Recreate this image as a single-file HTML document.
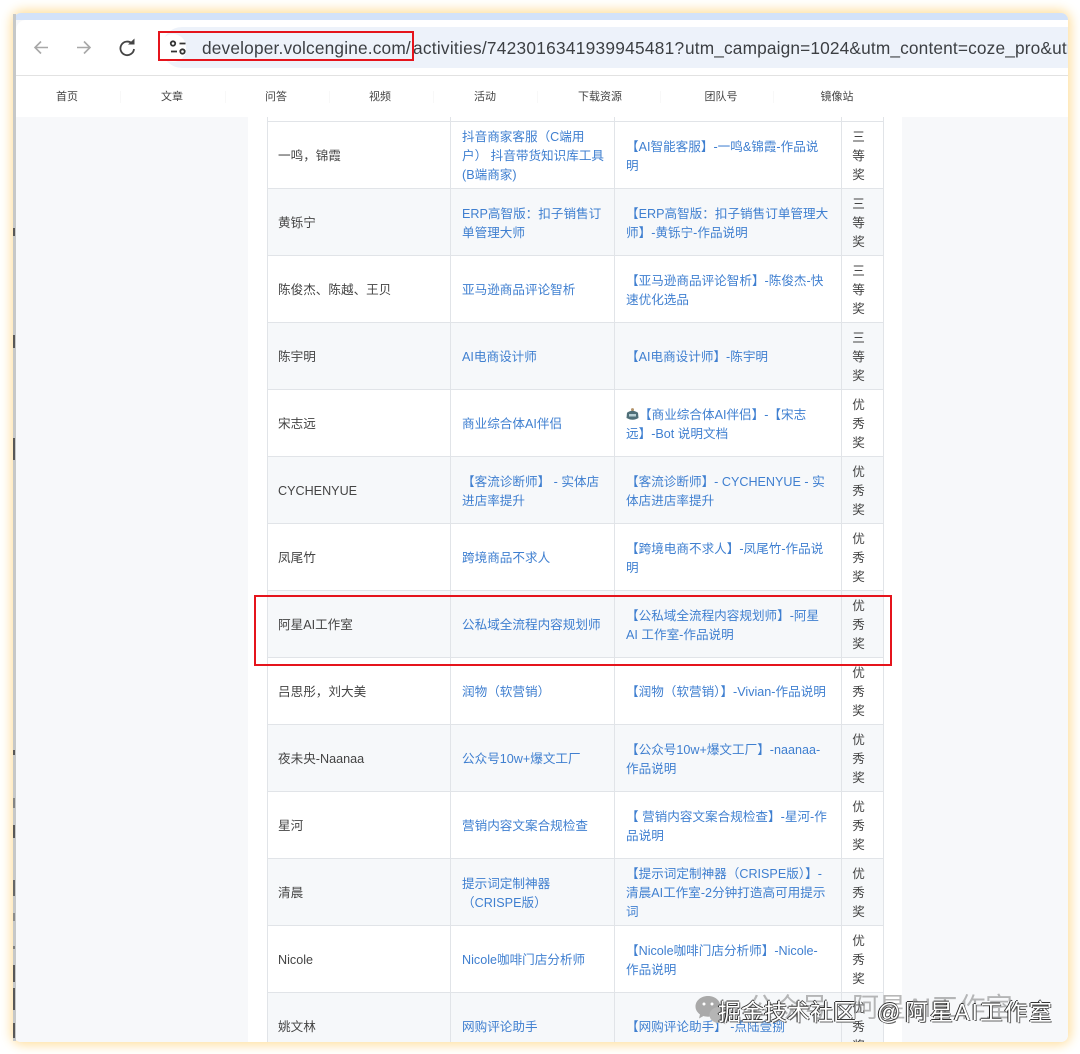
<!DOCTYPE html>
<html lang="zh"><head><meta charset="utf-8"><style>
html,body{margin:0;padding:0;background:#fff}
#p{position:relative;width:1080px;height:1054px;overflow:hidden;background:#fff;font-family:"Liberation Sans","Noto Sans CJK SC",sans-serif}
#glow{position:absolute;left:14px;top:13px;width:1054px;height:1029px;border-radius:9px;box-shadow:0 0 11px 3px #ffdf9f}
#w{position:absolute;left:14px;top:13px;width:1054px;height:1029px;border-radius:7px;overflow:hidden;background:#f7f8fa}
.a{position:absolute}
table{position:absolute;left:253px;top:104px;border-collapse:collapse;table-layout:fixed;width:617px;font-size:12.6px;line-height:19px;color:#444}
td{border:1px solid #e1e4e8;padding:4px 9px 0 11px;height:66px;box-sizing:border-box;overflow:hidden;white-space:nowrap;vertical-align:middle}
td:first-child{padding-left:10px}
tr{height:67px}
tr.g td{background:#f6f8fa}
td+td{color:#3f7fd0}
td:last-child{color:#444;text-align:center;padding:4px 8px 0 0}
.n{position:absolute;top:90px;font-size:11px;line-height:14px;color:#444;transform:translateX(-50%);white-space:nowrap}
.d{position:absolute;top:91px;width:1px;height:12px;background:#f8f8f8}
.r{position:absolute;border:solid #e5141c;box-sizing:border-box}
.s{position:absolute;left:13px;width:2px;background:#333;opacity:.75}
.u{position:absolute;top:37px;font-size:17.3px;line-height:22px;color:#3c3f43;white-space:nowrap}
.wm{position:absolute;top:997px;font-size:23px;line-height:30px;color:#fff;white-space:nowrap;text-shadow:-1px 0 0 #222,0 -1px 0 #333,1px 1px 0 #666}
</style></head><body><div id="p">
<div id="glow"></div>
<div id="w">
<div class="a" style="left:0;top:0;width:1054px;height:7px;background:#d3e2f9"></div>
<div class="a" style="left:2px;top:7px;width:1052px;height:55px;background:#fff;border-radius:10px 0 0 0"></div>
<div class="a" style="left:148px;top:14px;width:906px;height:41px;background:#edf2fa;border-radius:20px 0 0 20px"></div>
<div class="a" style="left:146px;top:21px;width:26px;height:28px;background:#fff;border-radius:14px"></div>
<div class="a" style="left:0;top:62px;width:1054px;height:1px;background:#e2e2e2"></div>
<div class="a" style="left:2px;top:63px;width:1052px;height:41px;background:#fff"></div>
<div class="a" style="left:2px;top:104px;width:1052px;height:925px;background:#f7f8fa"></div>
<div class="a" style="left:234px;top:104px;width:654px;height:925px;background:#fff"></div>
<table>
<colgroup><col style="width:183px"><col style="width:164px"><col style="width:227px"><col style="width:42px"></colgroup>
<tr style="height:4px"><td style="height:4px;border-top:0;padding:0"></td><td style="height:4px;border-top:0;padding:0"></td><td style="height:4px;border-top:0;padding:0"></td><td style="height:4px;border-top:0;padding:0"></td></tr>
<tr><td>一鸣，锦霞</td><td>抖音商家客服（C端用<br>户） 抖音带货知识库工具<br>(B端商家)</td><td>【AI智能客服】-一鸣&amp;锦霞-作品说<br>明</td><td>三<br>等<br>奖</td></tr>
<tr class="g"><td>黄铄宁</td><td>ERP高智版：扣子销售订<br>单管理大师</td><td>【ERP高智版：扣子销售订单管理大<br>师】-黄铄宁-作品说明</td><td>三<br>等<br>奖</td></tr>
<tr><td>陈俊杰、陈越、王贝</td><td>亚马逊商品评论智析</td><td>【亚马逊商品评论智析】-陈俊杰-快<br>速优化选品</td><td>三<br>等<br>奖</td></tr>
<tr class="g"><td>陈宇明</td><td>AI电商设计师</td><td>【AI电商设计师】-陈宇明</td><td>三<br>等<br>奖</td></tr>
<tr><td>宋志远</td><td>商业综合体AI伴侣</td><td><svg width="13" height="13" viewBox="0 0 13 13" style="vertical-align:-2px"><circle cx="6.5" cy="1.6" r="1.5" fill="#b5946a"/><path d="M1 4.800Q6.500.8 12 4.800L12.500 10Q6.500 13.500.5 10Z" fill="#4f6f78"/><path d="M3 6h7v2.500H3z" fill="#b8d0d6"/></svg>【商业综合体AI伴侣】-【宋志<br>远】-Bot 说明文档</td><td>优<br>秀<br>奖</td></tr>
<tr class="g"><td>CYCHENYUE</td><td>【客流诊断师】 - 实体店<br>进店率提升</td><td>【客流诊断师】- CYCHENYUE - 实<br>体店进店率提升</td><td>优<br>秀<br>奖</td></tr>
<tr><td>凤尾竹</td><td>跨境商品不求人</td><td>【跨境电商不求人】-凤尾竹-作品说<br>明</td><td>优<br>秀<br>奖</td></tr>
<tr class="g"><td>阿星AI工作室</td><td>公私域全流程内容规划师</td><td>【公私域全流程内容规划师】-阿星<br>AI 工作室-作品说明</td><td>优<br>秀<br>奖</td></tr>
<tr><td>吕思彤，刘大美</td><td>润物（软营销）</td><td>【润物（软营销）】-Vivian-作品说明</td><td>优<br>秀<br>奖</td></tr>
<tr class="g"><td>夜未央-Naanaa</td><td>公众号10w+爆文工厂</td><td>【公众号10w+爆文工厂】-naanaa-<br>作品说明</td><td>优<br>秀<br>奖</td></tr>
<tr><td>星河</td><td>营销内容文案合规检查</td><td>【 营销内容文案合规检查】-星河-作<br>品说明</td><td>优<br>秀<br>奖</td></tr>
<tr class="g"><td>清晨</td><td>提示词定制神器<br>（CRISPE版）</td><td>【提示词定制神器（CRISPE版）】-<br>清晨AI工作室-2分钟打造高可用提示<br>词</td><td>优<br>秀<br>奖</td></tr>
<tr><td>Nicole</td><td>Nicole咖啡门店分析师</td><td>【Nicole咖啡门店分析师】-Nicole-<br>作品说明</td><td>优<br>秀<br>奖</td></tr>
<tr class="g"><td>姚文林</td><td>网购评论助手</td><td>【网购评论助手】 -点陆壹捌</td><td>优<br>秀<br>奖</td></tr>
</table>
</div>
<div class="a" style="left:13px;top:14px;width:3px;height:1027px;background:#c6c8c8"></div>
<div class="s" style="top:228px;height:8px"></div>
<div class="s" style="top:335px;height:13px"></div>
<div class="s" style="top:438px;height:22px"></div>
<div class="s" style="top:750px;height:5px"></div>
<div class="s" style="top:798px;height:10px;opacity:.45"></div>
<div class="s" style="top:825px;height:13px"></div>
<div class="s" style="top:880px;height:16px;opacity:.65"></div>
<div class="s" style="top:913px;height:8px;opacity:.4"></div>
<div class="s" style="top:946px;height:3px;opacity:.5"></div>
<div class="s" style="top:965px;height:17px"></div>
<div class="s" style="top:988px;height:22px"></div>
<div class="s" style="top:1023px;height:15px"></div>

<svg class="a" style="left:30px;top:36px" width="110" height="24" viewBox="0 0 110 24" fill="none">
<g stroke="#a8a8a8" stroke-width="1.6"><path d="M18 11.500H5M11 5.500l-6 6 6 6"/><path d="M47 11.500h13M54 5.500l6 6-6 6"/></g>
<path d="M102 7.500A6.800 6.800 0 1 0 104 13" stroke="#444" stroke-width="1.800"/><path d="M98 8.500h6.500V2.500z" fill="#444"/>
</svg>
<svg class="a" style="left:168px;top:39px" width="20" height="18" viewBox="0 0 20 18" fill="none" stroke="#333" stroke-width="1.800">
<circle cx="5" cy="4.500" r="2.200"/><path d="M11.500 4.500h6M3 12.500h6"/><circle cx="14.500" cy="12.500" r="2.200"/>
</svg>
<div class="a" style="left:202px;top:37px;width:866px;height:22px;overflow:hidden">
<span class="u" style="left:0;top:0;letter-spacing:.17px">developer.volcengine.com/</span>
<span class="u" style="left:211px;top:0;letter-spacing:.26px">activities/7423016341939945481?</span>
<span class="u" style="left:483px;top:0;letter-spacing:.15px">utm_campaign=1024&amp;utm_content=coze_pro&amp;utm_term=x</span>
</div>

<div class="n" style="left:67px">首页</div><div class="d" style="left:120px"></div>
<div class="n" style="left:172px">文章</div><div class="d" style="left:225px"></div>
<div class="n" style="left:276px">问答</div><div class="d" style="left:329px"></div>
<div class="n" style="left:380px">视频</div><div class="d" style="left:433px"></div>
<div class="n" style="left:485px">活动</div><div class="d" style="left:537px"></div>
<div class="n" style="left:600px">下载资源</div><div class="d" style="left:660px"></div>
<div class="n" style="left:721px">团队号</div><div class="d" style="left:773px"></div>
<div class="n" style="left:837px">镜像站</div>

<div class="r" style="left:158px;top:31px;width:256px;height:30px;border-width:2px"></div>
<div class="r" style="left:254px;top:595px;width:638px;height:71px;border-width:2.5px"></div>

<svg class="a" style="left:694px;top:994px" width="42" height="34" viewBox="0 0 42 34">
<path d="M14 2C6.500 2 1.500 7 1.500 12.500c0 3.500 2 6 4.500 8l-1 4 4.500-2.500c1.500.5 3 .7 4.500.7 7 0 12.500-4.700 12.500-10.200S21.500 2 14 2z" fill="#a9a9a9"/>
<circle cx="10" cy="10" r="1.500" fill="#fff"/><circle cx="18" cy="10" r="1.500" fill="#fff"/>
<path d="M25 13c-5.500 0-9.500 3.700-9.500 8s4 8 9.500 8c1.200 0 2.200-.2 3.200-.5l3.300 2-.8-3c2.300-1.500 3.800-4 3.800-6.500 0-4.300-4-8-9.500-8z" fill="#b5b5b5"/>
</svg>
<div class="a" style="left:747px;top:993px;font-size:27px;line-height:30px;color:rgba(125,125,125,.55);white-space:nowrap">公众号 · 阿星AI工作室</div>
<div class="wm" style="left:718px">掘金技术社区</div>
<div class="wm" style="left:877px">@</div>
<div class="wm" style="left:905px;letter-spacing:1.7px">阿星AI工作室</div>
</div></body></html>
